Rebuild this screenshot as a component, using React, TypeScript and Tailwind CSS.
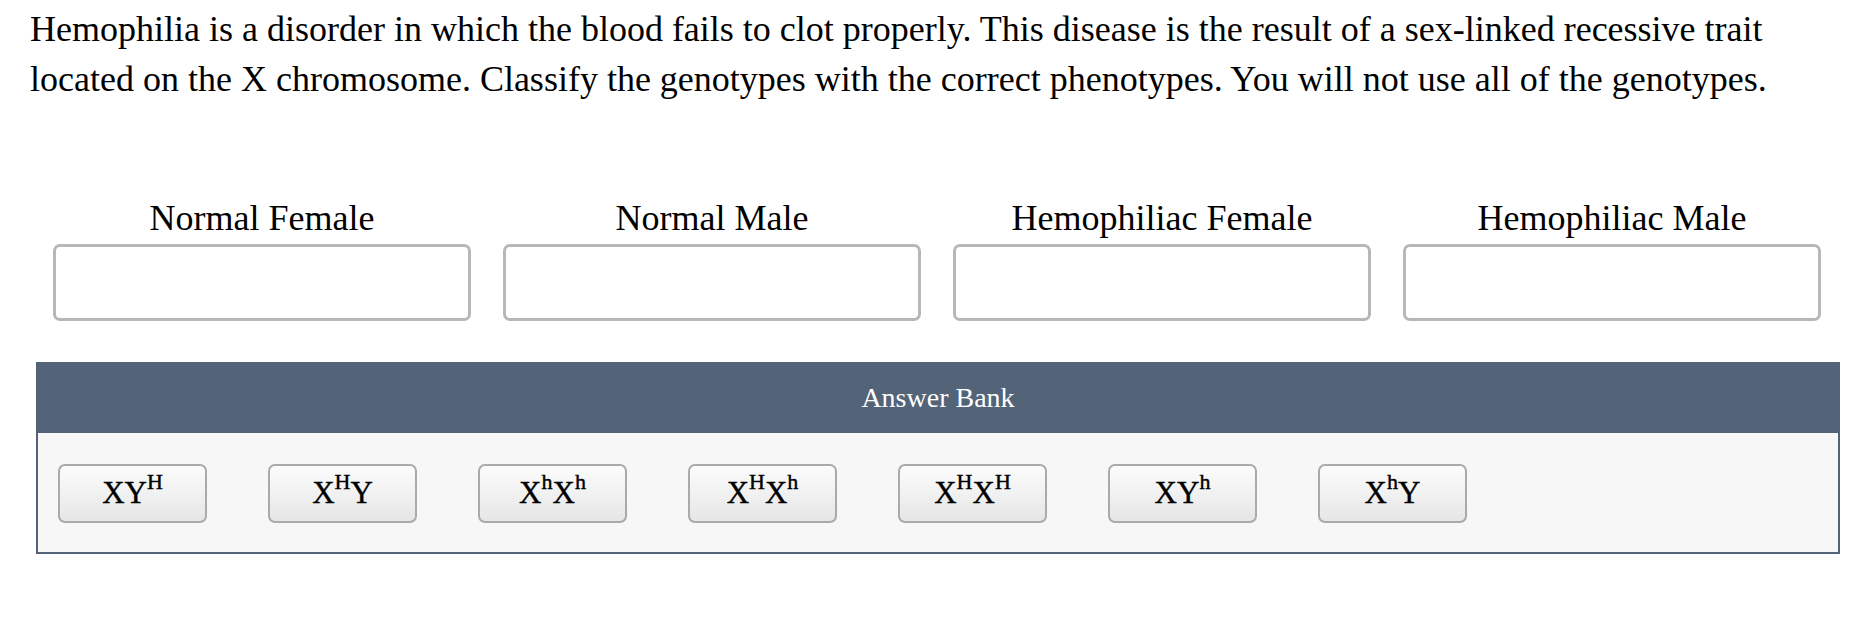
const phenotypes = ['Normal Female', 'Normal Male', 'Hemophiliac Female', 'Hemophiliac Male'];

const genotypes: { base: string; sup: string; tail?: string }[] = [
  { base: 'XY', sup: 'H' },
  { base: 'X', sup: 'H', tail: 'Y' },
  { base: 'X', sup: 'h', tail: 'X' + 'h' },
  { base: 'X', sup: 'H', tail: 'X' + 'h' },
  { base: 'X', sup: 'H', tail: 'X' + 'H' },
  { base: 'XY', sup: 'h' },
  { base: 'X', sup: 'h', tail: 'Y' },
];

const Sup = ({ children }: { children: string }) => (
  <sup className="font-['Liberation_Serif','Times_New_Roman',serif] text-[22px] relative top-[-3px] align-super leading-none">
    {children}
  </sup>
);

const Chip = ({ g }: { g: (typeof genotypes)[number] }) => {
  // tail may hold a second allele, e.g. "Xh" -> X with superscript h
  const tail = g.tail;
  return (
    <div className="w-[149px] h-[59px] flex items-center justify-center rounded-[7px] border-2 border-[#aaaaaa] bg-gradient-to-b from-[#fcfcfc] to-[#e6e6e6] text-[31px] text-black [-webkit-text-stroke:0.4px_black]">
      <span>
        {g.base}
        <Sup>{g.sup}</Sup>
        {tail && tail.length === 1 && tail}
        {tail && tail.length === 2 && (
          <>
            {tail[0]}
            <Sup>{tail[1]}</Sup>
          </>
        )}
      </span>
    </div>
  );
};

const App = () => {
  return (
    <div className="w-[1866px] h-[620px] bg-white text-black font-['Liberation_Serif','Times_New_Roman',serif]">
      <p className="pl-[30px] w-[1810px] pt-[4px] text-[36px] leading-[50px]">
        Hemophilia is a disorder in which the blood fails to clot properly. This disease is the result of a sex-linked
        recessive trait located on the X chromosome. Classify the genotypes with the correct phenotypes. You will not use
        all of the genotypes.
      </p>

      <div className="ml-[53px] mt-[93px] grid grid-cols-[repeat(4,418px)] gap-x-[32px]">
        {phenotypes.map((p) => (
          <div key={p} className="flex flex-col items-center">
            <div className="text-[36px] leading-[42px] mb-[5px]">{p}</div>
            <div className="w-[418px] h-[77px] rounded-[7px] border-[3px] border-[#b7b7b7] bg-white" />
          </div>
        ))}
      </div>

      <div className="ml-[36px] mt-[41px] w-[1804px]">
        <div className="h-[71px] bg-[#536479] flex items-center justify-center text-white text-[28px]">Answer Bank</div>
        <div className="h-[121px] bg-[#f7f7f7] border-x-2 border-b-2 border-[#536479] pl-[20px] pt-[31px] flex gap-[61px] items-start">
          {genotypes.map((g, i) => (
            <Chip key={i} g={g} />
          ))}
        </div>
      </div>
    </div>
  );
};

export default App;
